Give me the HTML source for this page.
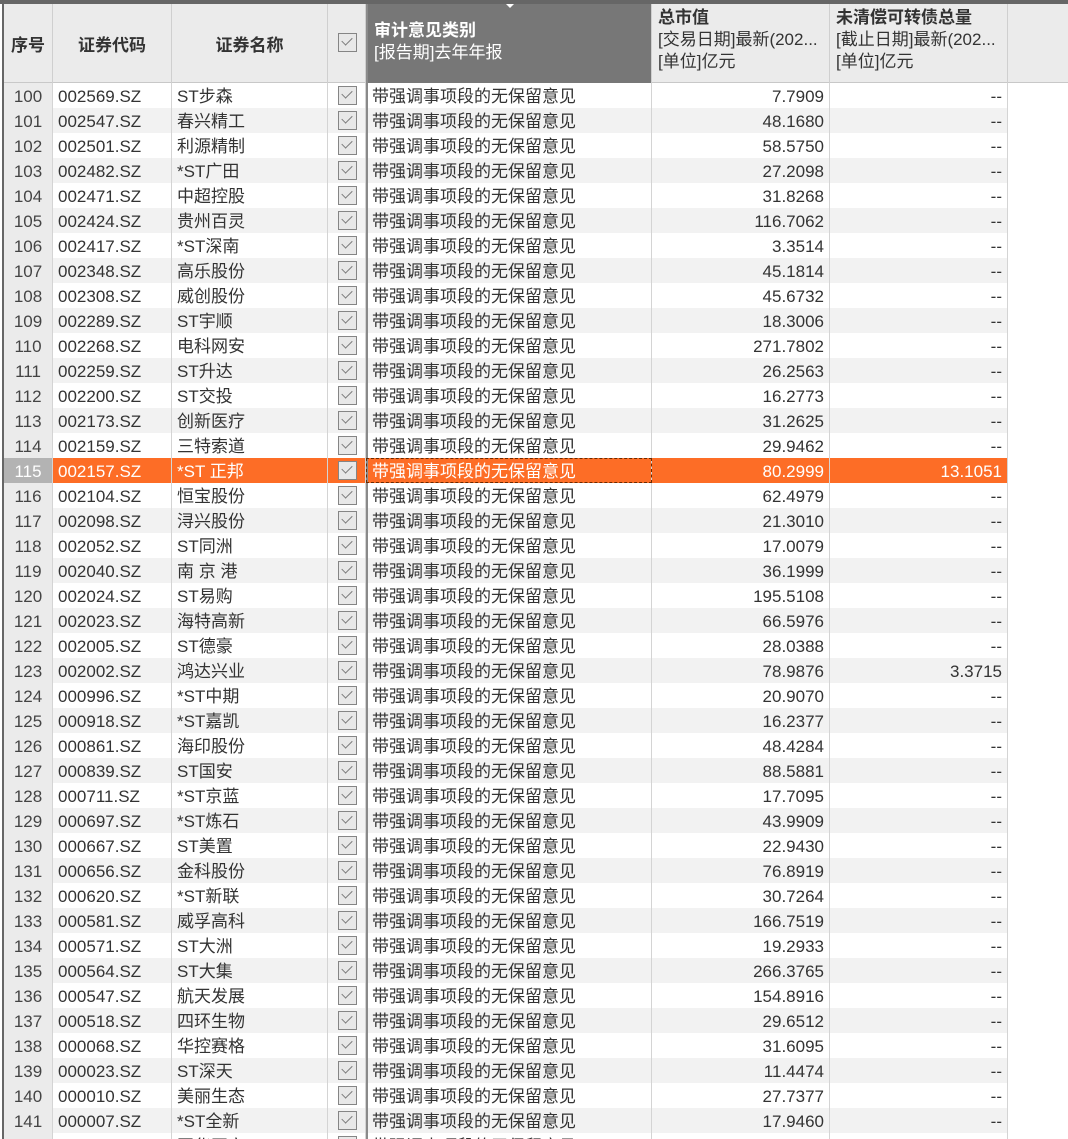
<!DOCTYPE html>
<html><head><meta charset="utf-8">
<style>
*{margin:0;padding:0;box-sizing:border-box}
html,body{width:1068px;height:1139px;overflow:hidden;background:#fff}
body{font-family:"Liberation Sans","Noto Sans CJK SC",sans-serif;font-size:17px;color:#333;position:relative}
#top{position:absolute;left:0;top:0;width:1068px;height:4px;background:#666}
#lft{position:absolute;left:2px;top:0;width:2px;height:1139px;background:#666}
#hdr{position:absolute;left:4px;top:4px;width:1064px;height:79px;background:#ebebeb;border-bottom:1px solid #c8c8c8}
.h{position:absolute;top:0;height:79px;border-right:1px solid #cfcfcf}
.hc{display:flex;align-items:center;justify-content:center;font-weight:bold}
#rows{position:absolute;left:4px;top:83px;width:1004px}
.r{height:25px;display:flex;white-space:nowrap;line-height:28px}
.r:nth-child(even) > div{background:#f2f2f2}
.r > div{background:#fff;border-right:1px solid #d4d4d4;overflow:hidden;height:25px}
.r > div.n{width:49px;text-align:center;background:#ebebeb!important;color:#444}
.c1{width:119px;padding-left:5px}
.c2{width:156px;padding-left:5px}
.c3{width:38px;position:relative}
.c4{width:286px;padding-left:4px;border-left:2px solid #8a8a8a}
.c5{width:178px;text-align:right;padding-right:5px}
.c6{width:178px;text-align:right;padding-right:5px}
.cb{position:absolute;left:10px;top:3px;width:19px;height:19px;border:1.5px solid #858585;background:#e8e8e8}
.cb:after{content:"";position:absolute;left:3px;top:3px;width:9px;height:5px;border-left:1.5px solid #7a7a7a;border-bottom:1.5px solid #7a7a7a;transform:rotate(-45deg)}
.r.sel > div{background:#fd6d26!important;color:#fff}
.r.sel > div.n{background:#b3b3b3!important;color:#fff}
.r.sel .c4{outline:1px dashed #6a2a00;outline-offset:-1px}
</style></head><body>
<div id="top"></div><div id="lft"></div>
<div id="hdr">
 <div class="h hc" style="left:0;width:49px">序号</div>
 <div class="h hc" style="left:49px;width:119px">证券代码</div>
 <div class="h hc" style="left:168px;width:156px">证券名称</div>
 <div class="h" style="left:324px;width:38px"><div class="cb" style="top:29px"></div></div>
 <div class="h" style="left:362px;width:286px;background:#777;color:#fff;border-left:2px solid #8a8a8a;padding:16px 0 0 6px;line-height:22px">
  <div style="position:absolute;left:138px;top:0;width:0;height:0;border-left:4px solid transparent;border-right:4px solid transparent;border-top:4px solid #fff"></div>
  <b>审计意见类别</b><br>[报告期]去年年报</div>
 <div class="h" style="left:648px;width:178px;padding:3px 0 0 6px;line-height:22px;white-space:nowrap;overflow:hidden"><b>总市值</b><br>[交易日期]最新(202...<br>[单位]亿元</div>
 <div class="h" style="left:826px;width:178px;padding:3px 0 0 6px;line-height:22px;white-space:nowrap;overflow:hidden"><b>未清偿可转债总量</b><br>[截止日期]最新(202...<br>[单位]亿元</div>
</div>
<div id="rows">
<div class="r"><div class="n">100</div><div class="c1">002569.SZ</div><div class="c2">ST步森</div><div class="c3"><i class="cb"></i></div><div class="c4">带强调事项段的无保留意见</div><div class="c5">7.7909</div><div class="c6">--</div></div>
<div class="r"><div class="n">101</div><div class="c1">002547.SZ</div><div class="c2">春兴精工</div><div class="c3"><i class="cb"></i></div><div class="c4">带强调事项段的无保留意见</div><div class="c5">48.1680</div><div class="c6">--</div></div>
<div class="r"><div class="n">102</div><div class="c1">002501.SZ</div><div class="c2">利源精制</div><div class="c3"><i class="cb"></i></div><div class="c4">带强调事项段的无保留意见</div><div class="c5">58.5750</div><div class="c6">--</div></div>
<div class="r"><div class="n">103</div><div class="c1">002482.SZ</div><div class="c2">*ST广田</div><div class="c3"><i class="cb"></i></div><div class="c4">带强调事项段的无保留意见</div><div class="c5">27.2098</div><div class="c6">--</div></div>
<div class="r"><div class="n">104</div><div class="c1">002471.SZ</div><div class="c2">中超控股</div><div class="c3"><i class="cb"></i></div><div class="c4">带强调事项段的无保留意见</div><div class="c5">31.8268</div><div class="c6">--</div></div>
<div class="r"><div class="n">105</div><div class="c1">002424.SZ</div><div class="c2">贵州百灵</div><div class="c3"><i class="cb"></i></div><div class="c4">带强调事项段的无保留意见</div><div class="c5">116.7062</div><div class="c6">--</div></div>
<div class="r"><div class="n">106</div><div class="c1">002417.SZ</div><div class="c2">*ST深南</div><div class="c3"><i class="cb"></i></div><div class="c4">带强调事项段的无保留意见</div><div class="c5">3.3514</div><div class="c6">--</div></div>
<div class="r"><div class="n">107</div><div class="c1">002348.SZ</div><div class="c2">高乐股份</div><div class="c3"><i class="cb"></i></div><div class="c4">带强调事项段的无保留意见</div><div class="c5">45.1814</div><div class="c6">--</div></div>
<div class="r"><div class="n">108</div><div class="c1">002308.SZ</div><div class="c2">威创股份</div><div class="c3"><i class="cb"></i></div><div class="c4">带强调事项段的无保留意见</div><div class="c5">45.6732</div><div class="c6">--</div></div>
<div class="r"><div class="n">109</div><div class="c1">002289.SZ</div><div class="c2">ST宇顺</div><div class="c3"><i class="cb"></i></div><div class="c4">带强调事项段的无保留意见</div><div class="c5">18.3006</div><div class="c6">--</div></div>
<div class="r"><div class="n">110</div><div class="c1">002268.SZ</div><div class="c2">电科网安</div><div class="c3"><i class="cb"></i></div><div class="c4">带强调事项段的无保留意见</div><div class="c5">271.7802</div><div class="c6">--</div></div>
<div class="r"><div class="n">111</div><div class="c1">002259.SZ</div><div class="c2">ST升达</div><div class="c3"><i class="cb"></i></div><div class="c4">带强调事项段的无保留意见</div><div class="c5">26.2563</div><div class="c6">--</div></div>
<div class="r"><div class="n">112</div><div class="c1">002200.SZ</div><div class="c2">ST交投</div><div class="c3"><i class="cb"></i></div><div class="c4">带强调事项段的无保留意见</div><div class="c5">16.2773</div><div class="c6">--</div></div>
<div class="r"><div class="n">113</div><div class="c1">002173.SZ</div><div class="c2">创新医疗</div><div class="c3"><i class="cb"></i></div><div class="c4">带强调事项段的无保留意见</div><div class="c5">31.2625</div><div class="c6">--</div></div>
<div class="r"><div class="n">114</div><div class="c1">002159.SZ</div><div class="c2">三特索道</div><div class="c3"><i class="cb"></i></div><div class="c4">带强调事项段的无保留意见</div><div class="c5">29.9462</div><div class="c6">--</div></div>
<div class="r sel"><div class="n">115</div><div class="c1">002157.SZ</div><div class="c2">*ST 正邦</div><div class="c3"><i class="cb"></i></div><div class="c4">带强调事项段的无保留意见</div><div class="c5">80.2999</div><div class="c6">13.1051</div></div>
<div class="r"><div class="n">116</div><div class="c1">002104.SZ</div><div class="c2">恒宝股份</div><div class="c3"><i class="cb"></i></div><div class="c4">带强调事项段的无保留意见</div><div class="c5">62.4979</div><div class="c6">--</div></div>
<div class="r"><div class="n">117</div><div class="c1">002098.SZ</div><div class="c2">浔兴股份</div><div class="c3"><i class="cb"></i></div><div class="c4">带强调事项段的无保留意见</div><div class="c5">21.3010</div><div class="c6">--</div></div>
<div class="r"><div class="n">118</div><div class="c1">002052.SZ</div><div class="c2">ST同洲</div><div class="c3"><i class="cb"></i></div><div class="c4">带强调事项段的无保留意见</div><div class="c5">17.0079</div><div class="c6">--</div></div>
<div class="r"><div class="n">119</div><div class="c1">002040.SZ</div><div class="c2">南 京 港</div><div class="c3"><i class="cb"></i></div><div class="c4">带强调事项段的无保留意见</div><div class="c5">36.1999</div><div class="c6">--</div></div>
<div class="r"><div class="n">120</div><div class="c1">002024.SZ</div><div class="c2">ST易购</div><div class="c3"><i class="cb"></i></div><div class="c4">带强调事项段的无保留意见</div><div class="c5">195.5108</div><div class="c6">--</div></div>
<div class="r"><div class="n">121</div><div class="c1">002023.SZ</div><div class="c2">海特高新</div><div class="c3"><i class="cb"></i></div><div class="c4">带强调事项段的无保留意见</div><div class="c5">66.5976</div><div class="c6">--</div></div>
<div class="r"><div class="n">122</div><div class="c1">002005.SZ</div><div class="c2">ST德豪</div><div class="c3"><i class="cb"></i></div><div class="c4">带强调事项段的无保留意见</div><div class="c5">28.0388</div><div class="c6">--</div></div>
<div class="r"><div class="n">123</div><div class="c1">002002.SZ</div><div class="c2">鸿达兴业</div><div class="c3"><i class="cb"></i></div><div class="c4">带强调事项段的无保留意见</div><div class="c5">78.9876</div><div class="c6">3.3715</div></div>
<div class="r"><div class="n">124</div><div class="c1">000996.SZ</div><div class="c2">*ST中期</div><div class="c3"><i class="cb"></i></div><div class="c4">带强调事项段的无保留意见</div><div class="c5">20.9070</div><div class="c6">--</div></div>
<div class="r"><div class="n">125</div><div class="c1">000918.SZ</div><div class="c2">*ST嘉凯</div><div class="c3"><i class="cb"></i></div><div class="c4">带强调事项段的无保留意见</div><div class="c5">16.2377</div><div class="c6">--</div></div>
<div class="r"><div class="n">126</div><div class="c1">000861.SZ</div><div class="c2">海印股份</div><div class="c3"><i class="cb"></i></div><div class="c4">带强调事项段的无保留意见</div><div class="c5">48.4284</div><div class="c6">--</div></div>
<div class="r"><div class="n">127</div><div class="c1">000839.SZ</div><div class="c2">ST国安</div><div class="c3"><i class="cb"></i></div><div class="c4">带强调事项段的无保留意见</div><div class="c5">88.5881</div><div class="c6">--</div></div>
<div class="r"><div class="n">128</div><div class="c1">000711.SZ</div><div class="c2">*ST京蓝</div><div class="c3"><i class="cb"></i></div><div class="c4">带强调事项段的无保留意见</div><div class="c5">17.7095</div><div class="c6">--</div></div>
<div class="r"><div class="n">129</div><div class="c1">000697.SZ</div><div class="c2">*ST炼石</div><div class="c3"><i class="cb"></i></div><div class="c4">带强调事项段的无保留意见</div><div class="c5">43.9909</div><div class="c6">--</div></div>
<div class="r"><div class="n">130</div><div class="c1">000667.SZ</div><div class="c2">ST美置</div><div class="c3"><i class="cb"></i></div><div class="c4">带强调事项段的无保留意见</div><div class="c5">22.9430</div><div class="c6">--</div></div>
<div class="r"><div class="n">131</div><div class="c1">000656.SZ</div><div class="c2">金科股份</div><div class="c3"><i class="cb"></i></div><div class="c4">带强调事项段的无保留意见</div><div class="c5">76.8919</div><div class="c6">--</div></div>
<div class="r"><div class="n">132</div><div class="c1">000620.SZ</div><div class="c2">*ST新联</div><div class="c3"><i class="cb"></i></div><div class="c4">带强调事项段的无保留意见</div><div class="c5">30.7264</div><div class="c6">--</div></div>
<div class="r"><div class="n">133</div><div class="c1">000581.SZ</div><div class="c2">威孚高科</div><div class="c3"><i class="cb"></i></div><div class="c4">带强调事项段的无保留意见</div><div class="c5">166.7519</div><div class="c6">--</div></div>
<div class="r"><div class="n">134</div><div class="c1">000571.SZ</div><div class="c2">ST大洲</div><div class="c3"><i class="cb"></i></div><div class="c4">带强调事项段的无保留意见</div><div class="c5">19.2933</div><div class="c6">--</div></div>
<div class="r"><div class="n">135</div><div class="c1">000564.SZ</div><div class="c2">ST大集</div><div class="c3"><i class="cb"></i></div><div class="c4">带强调事项段的无保留意见</div><div class="c5">266.3765</div><div class="c6">--</div></div>
<div class="r"><div class="n">136</div><div class="c1">000547.SZ</div><div class="c2">航天发展</div><div class="c3"><i class="cb"></i></div><div class="c4">带强调事项段的无保留意见</div><div class="c5">154.8916</div><div class="c6">--</div></div>
<div class="r"><div class="n">137</div><div class="c1">000518.SZ</div><div class="c2">四环生物</div><div class="c3"><i class="cb"></i></div><div class="c4">带强调事项段的无保留意见</div><div class="c5">29.6512</div><div class="c6">--</div></div>
<div class="r"><div class="n">138</div><div class="c1">000068.SZ</div><div class="c2">华控赛格</div><div class="c3"><i class="cb"></i></div><div class="c4">带强调事项段的无保留意见</div><div class="c5">31.6095</div><div class="c6">--</div></div>
<div class="r"><div class="n">139</div><div class="c1">000023.SZ</div><div class="c2">ST深天</div><div class="c3"><i class="cb"></i></div><div class="c4">带强调事项段的无保留意见</div><div class="c5">11.4474</div><div class="c6">--</div></div>
<div class="r"><div class="n">140</div><div class="c1">000010.SZ</div><div class="c2">美丽生态</div><div class="c3"><i class="cb"></i></div><div class="c4">带强调事项段的无保留意见</div><div class="c5">27.7377</div><div class="c6">--</div></div>
<div class="r"><div class="n">141</div><div class="c1">000007.SZ</div><div class="c2">*ST全新</div><div class="c3"><i class="cb"></i></div><div class="c4">带强调事项段的无保留意见</div><div class="c5">17.9460</div><div class="c6">--</div></div>
<div class="r"><div class="n">142</div><div class="c1">000004.SZ</div><div class="c2">国华网安</div><div class="c3"><i class="cb"></i></div><div class="c4">带强调事项段的无保留意见</div><div class="c5">8.9570</div><div class="c6">--</div></div>
</div>
</body></html>
